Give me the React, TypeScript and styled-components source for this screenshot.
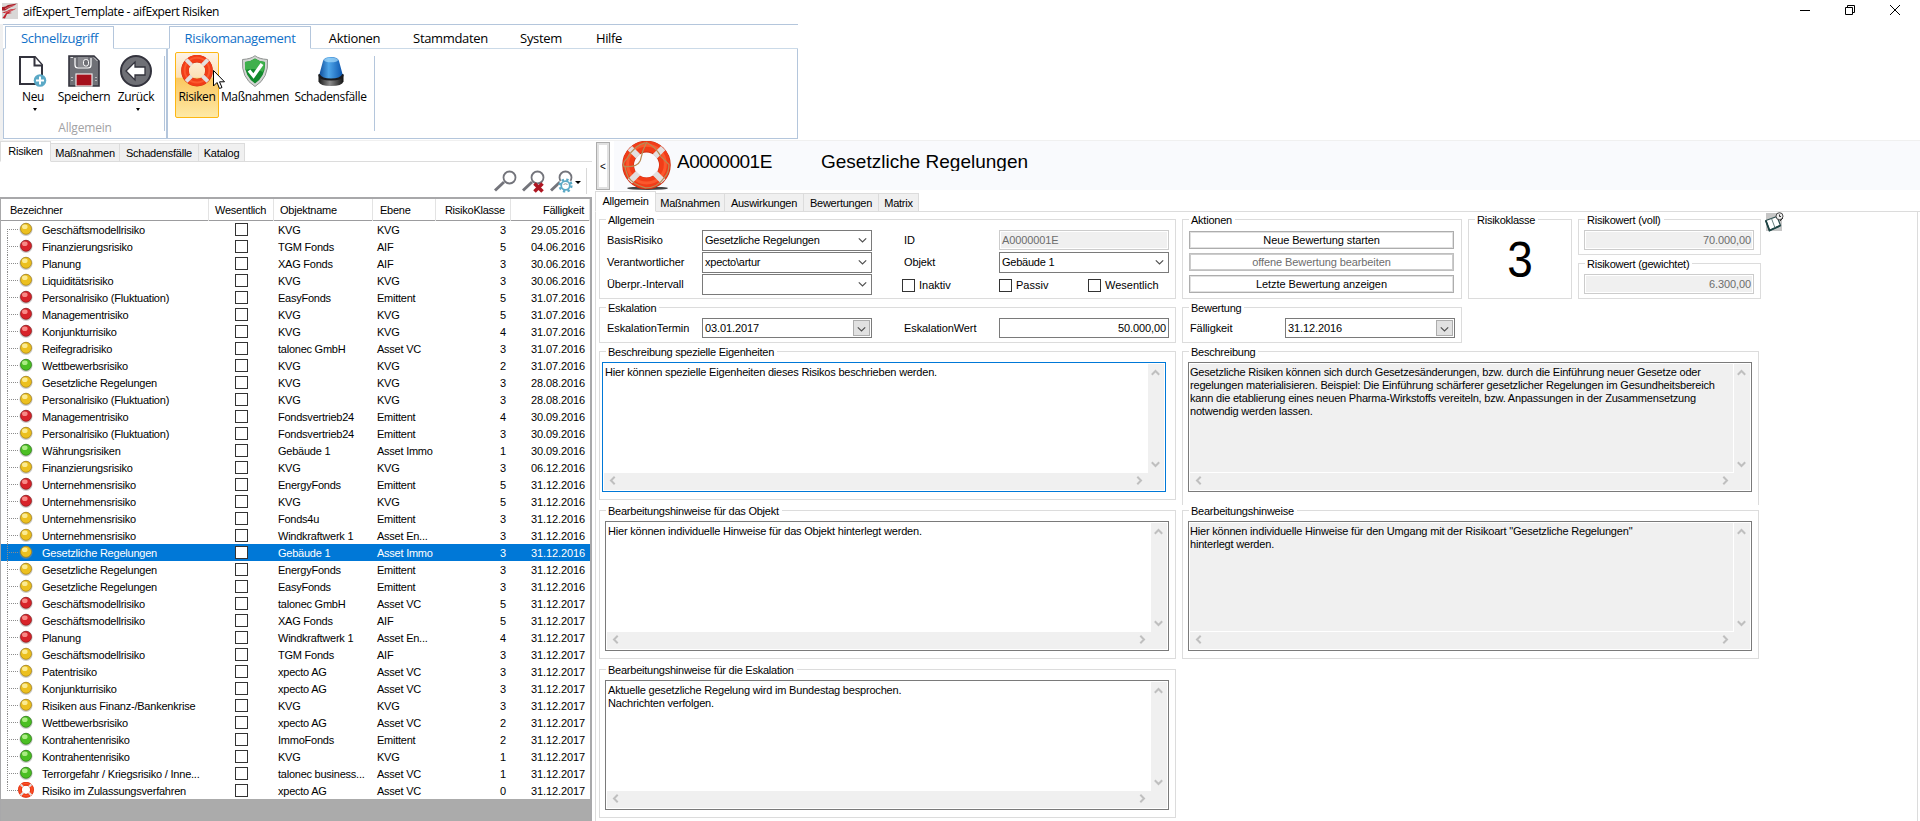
import React from "react";
import styled, { createGlobalStyle, css } from "styled-components";

const GlobalStyle = createGlobalStyle`
  *, *::before, *::after { box-sizing: border-box; }
  html, body { margin: 0; padding: 0; background: #fff; }
  body {
    width: 1920px; height: 821px; overflow: hidden; color: #000;
    font: 11px/13px "Liberation Sans", Arial, sans-serif;
    letter-spacing: -0.24px;
  }
`;

const LINE = "#dcdcdc";
const RIBBON_LINE = "#b4c6dc";

const Window = styled.div`
  width: 1920px;
  height: 821px;
  display: flex;
  flex-direction: column;
  background: #fff;
  white-space: nowrap;
`;

/* ---------- title bar ---------- */
const TitleBar = styled.header`
  height: 24px;
  display: flex;
  align-items: flex-start;
  padding: 3px 20px 0 2px;
  font: 12px/18px "Open Sans", "Noto Sans", sans-serif;
  letter-spacing: -0.38px;
`;
const Title = styled.span`
  margin-left: 5px;
  flex: 1;
`;
const WindowButtons = styled.div`
  display: flex;
  gap: 35px;
  padding-top: 2px;
`;

/* ---------- ribbon ---------- */
const Ribbon = styled.div`
  height: 116px;
  width: 798px;
  display: flex;
  border-left: 3px solid #f0f0f0;
`;
const RibbonPart = styled.section<{ $w: number }>`
  width: ${(p) => p.$w}px;
  height: 115px;
  display: flex;
  flex-direction: column;
  border-top: 1px solid ${RIBBON_LINE};
`;
const RibbonTabs = styled.nav<{ $lead: number }>`
  height: 24px;
  display: flex;
  padding-top: 1px;
  font: 13px/24px "Open Sans", "Noto Sans", sans-serif;
  letter-spacing: -0.33px;
  &::before {
    content: "";
    width: ${(p) => p.$lead}px;
    border-bottom: 1px solid #cbdae8;
  }
  &::after {
    content: "";
    flex: 1;
    border-bottom: 1px solid #cbdae8;
  }
`;
const RibbonTab = styled.span<{ $w: number; $active?: boolean }>`
  width: ${(p) => p.$w}px;
  text-align: center;
  border-bottom: 1px solid #cbdae8;
  ${(p) =>
    p.$active &&
    css`
      color: #1070c8;
      border: 1px solid ${RIBBON_LINE};
      border-bottom-color: #fff;
      line-height: 23px;
    `}
`;
const RibbonBody = styled.div<{ $right?: boolean }>`
  flex: 1;
  display: flex;
  align-items: flex-start;
  border: 1px solid ${RIBBON_LINE};
  border-top: 0;
  border-left-width: ${(p) => (p.$right ? 2 : 1)}px;
  border-right-width: ${(p) => (p.$right ? 1 : 0)}px;
  padding: 3px 0 0 7px;
`;
const ToolGroup = styled.div`
  display: flex;
  flex-direction: column;
  align-items: center;
`;
const ToolRow = styled.div`
  display: flex;
  height: 67px;
`;
const Tool = styled.button<{ $w: number; $hot?: boolean }>`
  width: ${(p) => p.$w}px;
  height: 66px;
  display: flex;
  flex-direction: column;
  align-items: center;
  padding: 2px 0 0;
  margin: 0;
  border: 1px solid transparent;
  border-radius: 2px;
  background: none;
  color: #000;
  font: 12px/18px "Open Sans", "Noto Sans", sans-serif;
  letter-spacing: -0.38px;
  white-space: nowrap;
  svg { flex: none; }
  ${(p) =>
    p.$hot &&
    css`
      border-color: #fdb714;
      background: linear-gradient(#fdf3e6 0, #fce0b5 38%, #fbc75e 39%, #fee9a6 100%);
    `}
`;
const ToolText = styled.span`
  margin-top: 1px;
`;
const Caret = styled.i`
  margin: 2px 0 0 3px;
  border: 2.5px solid transparent;
  border-top: 3px solid #000;
`;
const GroupCaption = styled.span`
  margin: 0;
  font: 12px/18px "Open Sans", "Noto Sans", sans-serif;
  letter-spacing: -0.2px;
  color: #a2a2a4;
`;
const ToolDivider = styled.i<{ $gap: number }>`
  width: 1px;
  height: 75px;
  margin: 4px 0 0 ${(p) => p.$gap}px;
  background: ${RIBBON_LINE};
`;
const Cursor = styled.svg`
  position: absolute;
  left: 213px;
  top: 70px;
`;

/* ---------- main split ---------- */
const Main = styled.main`
  flex: 1;
  display: flex;
  border-top: 1px solid #f0f0f0;
`;
const ListPane = styled.section`
  width: 592px;
  display: flex;
  flex-direction: column;
`;
const DetailPane = styled.section`
  flex: 1;
  margin-left: 3px;
  display: flex;
  flex-direction: column;
`;
const TabStrip = styled.nav`
  height: 21px;
  display: flex;
  align-items: flex-end;
  &::after {
    content: "";
    flex: 1;
    border-bottom: 1px solid ${LINE};
  }
`;
const Tab = styled.span<{ $w: number; $active?: boolean }>`
  width: ${(p) => p.$w}px;
  height: ${(p) => (p.$active ? 21 : 19)}px;
  padding-top: 3px;
  text-align: center;
  background: ${(p) => (p.$active ? "#fff" : "#f0f0f0")};
  border: 1px solid ${LINE};
  border-left-width: ${(p) => (p.$active ? 1 : 0)}px;
  border-bottom-color: ${(p) => (p.$active ? "#fff" : LINE)};
`;

/* ---------- list ---------- */
const SearchBar = styled.div`
  height: 35px;
  display: flex;
  align-items: flex-start;
  justify-content: flex-end;
  gap: 5px;
  margin-right: 5px;
  padding: 8px 6px 0 0;
  background: linear-gradient(#d8d8d8, #d8d8d8) 100% 70% / 1px 26px no-repeat;
`;
const SearchCaret = styled.i`
  margin: 11px 0 0 -3px;
  border: 3px solid transparent;
  border-top-color: #000;
`;
const Table = styled.div`
  flex: 1;
  background: #ababab;
  border: 2px solid #a8a8aa;
  border-left-width: 1px;
  border-bottom: 0;
`;
const COLS = "208px 65px 99px 63px 75px 79px";
const TableHead = styled.div`
  display: grid;
  grid-template-columns: ${COLS};
  height: 22px;
  background: #fff;
  border-bottom: 1px solid #9c9c9e;
`;
const HeadCell = styled.span<{ $right?: boolean; $pad: number }>`
  line-height: 22px;
  text-align: ${(p) => (p.$right ? "right" : "left")};
  padding: ${(p) => (p.$right ? `0 ${p.$pad}px 0 0` : `0 0 0 ${p.$pad}px`)};
  border-right: 1px solid #e3e3e3;
`;
const Row = styled.div<{ $selected?: boolean }>`
  display: grid;
  grid-template-columns: ${COLS};
  height: 17px;
  line-height: 18px;
  background: ${(p) => (p.$selected ? "#0078d7" : "#fff")};
  color: ${(p) => (p.$selected ? "#fff" : "#000")};
`;
const NameCell = styled.span`
  display: flex;
  align-items: flex-start;
`;
const Marker = styled.span`
  width: 16px;
  height: 17px;
  display: flex;
  justify-content: center;
`;
const NameText = styled.span`
  margin-left: 8px;
  letter-spacing: -0.22px;
`;
const Cell = styled.span<{ $pad: number }>`
  padding-left: ${(p) => p.$pad}px;
`;
const NumCell = styled.span<{ $pad: number }>`
  text-align: right;
  letter-spacing: -0.1px;
  padding-right: ${(p) => p.$pad}px;
`;
const Box = styled.i`
  display: block;
  flex: none;
  width: 13px;
  height: 13px;
  background: #fff;
  border: 1px solid #333;
`;
const BoxCell = styled.span`
  padding: 2px 0 0 26px;
`;

/* ---------- detail header ---------- */
const DetailHead = styled.div`
  height: 50px;
  display: flex;
  align-items: flex-start;
`;
const CollapseButton = styled.button`
  width: 14px;
  height: 48px;
  margin: 1px 4px 0 1px;
  padding: 0;
  border: 1px solid #adadad;
  box-shadow: inset 0 0 0 2px #e1e1e1;
  background: #fff;
  color: #000;
  font: 10px/13px "Liberation Sans", Arial, sans-serif;
`;
const HeadBand = styled.div`
  flex: 1;
  height: 49px;
  display: flex;
  background: #f9fafd;
  padding-left: 8px;
`;
const HeadTitle = styled.h1<{ $w: number; $ls: number }>`
  margin: 8px 0 0;
  width: ${(p) => p.$w}px;
  height: 22px;
  overflow: hidden;
  font: 400 19px/25px "Liberation Sans", Arial, sans-serif;
  letter-spacing: ${(p) => p.$ls}px;
`;
const HeadPicture = styled.div`
  width: 55px;
  height: 49px;
`;

/* ---------- form ---------- */
const Form = styled.div`
  flex: 1;
  display: flex;
  align-items: flex-start;
  gap: 7px;
  padding: 7px 0 0 3px;
  border-left: 1px solid ${LINE};
  border-right: 1px solid ${LINE};
  margin-right: 2px;
`;
const Column = styled.div<{ $w: number }>`
  width: ${(p) => p.$w}px;
  flex: none;
  display: flex;
  flex-direction: column;
`;
const TopRow = styled.div`
  display: flex;
  gap: 6px;
`;
const Group = styled.section<{ $w: number; $h: number; $mb?: number; $open?: boolean; $pad?: string }>`
  position: relative;
  flex: none;
  width: ${(p) => p.$w}px;
  height: ${(p) => p.$h}px;
  margin-bottom: ${(p) => p.$mb ?? 8}px;
  padding: ${(p) => p.$pad ?? "10px 5px 0"};
  border: 1px solid ${LINE};
  ${(p) => p.$open && "border-bottom: 0;"}
`;
const Legend = styled.span`
  position: absolute;
  left: 6px;
  top: -6px;
  padding: 0 3px 0 2px;
  background: #fff;
`;
const FieldGrid = styled.div`
  display: grid;
  grid-template-columns: 95px 170px 32px 95px 170px;
  row-gap: 1px;
  align-items: start;
  padding-left: 2px;
`;
const Label = styled.label`
  line-height: 21px;
  letter-spacing: -0.1px;
`;
const fieldBase = css`
  display: flex;
  align-items: center;
  width: 170px;
  border: 1px solid #7a7a7a;
  background: #fff;
  padding: 0 2px;
`;
const Combo = styled.div`
  ${fieldBase}
  height: 21px;
  justify-content: space-between;
  padding: 0 4px 0 2px;
`;
const DateField = styled.div`
  ${fieldBase}
  height: 20px;
  justify-content: space-between;
  padding: 0 1px 0 2px;
  letter-spacing: -0.1px;
`;
const DateButton = styled.span`
  width: 17px;
  height: 16px;
  display: flex;
  align-items: center;
  justify-content: center;
  padding-top: 2px;
  background: #e1e1e1;
  border: 1px solid #adadad;
`;
const Input = styled.div<{ $off?: boolean; $right?: boolean }>`
  ${fieldBase}
  height: 20px;
  letter-spacing: -0.1px;
  ${(p) => p.$right && "justify-content: flex-end;"}
  ${(p) =>
    p.$off &&
    css`
      color: #6d6d6d;
      background: #f0f0f0;
      border-color: #ccc;
      box-shadow: inset 0 0 0 1px #fff;
    `}
`;
const Checks = styled.div`
  grid-column: 4 / 6;
  margin-left: -2px;
  height: 21px;
  display: grid;
  grid-template-columns: 97px 89px 80px;
  align-items: center;
`;
const Check = styled.label`
  display: flex;
  gap: 4px;
  padding-top: 2px;
  letter-spacing: 0;
`;
const ActionButton = styled.button<{ $off?: boolean }>`
  display: block;
  width: 265px;
  height: 18px;
  margin: 0 0 4px 1px;
  padding: 0;
  border: 1px solid ${(p) => (p.$off ? "#bfbfbf" : "#adadad")};
  box-shadow: inset 0 0 0 1px ${(p) => (p.$off ? "#ccc" : "#e1e1e1")};
  background: #fff;
  color: ${(p) => (p.$off ? "#6d6d6d" : "#000")};
  font: 11px/14px "Liberation Sans", Arial, sans-serif;
  letter-spacing: -0.1px;
`;
const BigNumber = styled.div`
  font-size: 50px;
  line-height: 60px;
  text-align: center;
  transform: scaleX(0.92);
`;
const Area = styled.div<{ $focus?: boolean }>`
  width: 564px;
  height: 130px;
  margin-left: ${(p) => (p.$focus ? -3 : 0)}px;
  display: grid;
  grid-template: 1fr 17px / 1fr 16px;
  padding: 1px;
  border: 1px solid ${(p) => (p.$focus ? "#0078d7" : "#7a7a7a")};
  background: #fff;
`;
const AreaText = styled.div<{ $off?: boolean }>`
  padding: 2px 0 0 1px;
  white-space: pre;
  letter-spacing: -0.19px;
  ${(p) =>
    p.$off &&
    css`
      background: #f0f0f0;
      margin: 0 1px 1px 0;
      padding-left: 0;
    `}
`;
const VBar = styled.span`
  grid-row: 1 / 3;
  grid-column: 2;
  display: flex;
  flex-direction: column;
  align-items: center;
  justify-content: space-between;
  padding: 4px 2px 21px 0;
  background: #f0f0f0;
`;
const HBar = styled.span`
  grid-row: 2;
  grid-column: 1;
  display: flex;
  align-items: center;
  justify-content: space-between;
  padding: 0 4px 2px;
  background: #f0f0f0;
`;
const NotesButton = styled.span`
  margin: -7px 0 0 -2px;
  height: 20px;
`;

/* ---------- drawings ---------- */
const Chevron = ({ turn = 0, color = "#bfbfbf", w = 2 }: { turn?: number; color?: string; w?: number }) => (
  <svg width="9" height="9" viewBox="0 0 9 9">
    <path d="M0.8 2.3 4.5 6 8.2 2.3" fill="none" stroke={color} strokeWidth={w} transform={`rotate(${turn} 4.5 4.5)`} />
  </svg>
);

const Logo = () => (
  <svg width="16" height="16" viewBox="0 0 16 16">
    <rect width="16" height="16" fill="#d9d7d6" />
    <path d="M0 4Q3 4.500 6 2L15 .5Q11 4 7 5L3 7.500 0 7.500Z" fill="#a81c26" />
    <path d="M0 9.500Q5 8.500 8 6.500L14.500 5.500Q10 8 7 9.300L10 10 5 11 3 15.500 .5 15 4 10.300Z" fill="#c01f2a" />
    <path d="M3 5.800 8 3.500 13 2.300M3 9.800 8 7.800 12 6.700" stroke="#eb9a9c" strokeWidth=".6" fill="none" />
  </svg>
);

const MinIcon = () => (
  <svg width="10" height="10"><path d="M0 5.5H10" stroke="#000" /></svg>
);
const RestoreIcon = () => (
  <svg width="10" height="10" viewBox="0 0 10 10">
    <path d="M.5 2.5H7.5V9.5H.5ZM2.5 2.5V.5H9.5V7.5H7.5" fill="none" stroke="#000" />
  </svg>
);
const CloseIcon = () => (
  <svg width="10" height="10"><path d="M0 0 10 10M10 0 0 10" stroke="#000" /></svg>
);

const NewIcon = () => (
  <svg width="32" height="32" viewBox="0 0 32 32">
    <path d="M3 2H18L25 10V29H3Z" fill="#fff" stroke="#33333d" strokeWidth="2" />
    <path d="M17.500 2V10.500H25" fill="#fff" stroke="#33333d" strokeWidth="2" />
    <circle cx="23" cy="25.500" r="6.3" fill="#5ba9c6" />
    <path d="M23 21.500V29.500M19 25.500H27" stroke="#fff" strokeWidth="2" />
  </svg>
);
const SaveIcon = () => (
  <svg width="32" height="32" viewBox="0 0 32 32">
    <path d="M1 1H26L31 6V31H1Z" fill="#6f7076" stroke="#33333d" strokeWidth="1.6" />
    <path d="M7 3V10Q7 13 10 13H20Q23 13 23 10V3" fill="#6f7076" stroke="#fff" strokeWidth="1.2" />
    <path d="M10 2H20V12H10Z" fill="#8a8b90" />
    <rect x="15.500" y="4.500" width="5" height="6.500" rx="2.200" fill="#6f7076" stroke="#fff" />
    <path d="M2.500 2.500H5M26 2.500 29.500 6" stroke="#fff" strokeWidth=".8" />
    <rect x="8" y="19" width="16" height="12" fill="#a5101c" stroke="#e9e9ea" strokeWidth="1.200" />
    <path d="M4 22V28M28 22V28" stroke="#fff" strokeDasharray="1 2" />
  </svg>
);
const BackIcon = () => (
  <svg width="32" height="32" viewBox="0 0 32 32">
    <circle cx="16" cy="16" r="15" fill="#6f7076" stroke="#33333d" strokeWidth="2" />
    <path d="M6 16 15 7V12H25V20H15V25Z" fill="#fff" stroke="#33333d" strokeWidth="1.3" />
  </svg>
);
const Buoy = ({ size, rope }: { size: number; rope?: boolean }) => (
  <svg width={size} height={size} viewBox="0 0 48 48">
    {rope && <ellipse cx="25" cy="46.300" rx="20" ry="1.600" fill="#222" opacity=".85" />}
    <circle cx="24" cy="23.5" r="18" fill="none" stroke="#c93014" strokeWidth="11.5" />
    <circle cx="24" cy="23.2" r="18" fill="none" stroke="#f23c18" strokeWidth="10.4" />
    <circle cx="24" cy="22.7" r="18.5" fill="none" stroke="#ff6a3c" strokeWidth="3" opacity=".6" />
    <path
      d="M7.700 7 15.800 15.100M40.300 7 32.200 15.100M40.300 39.600 32.200 31.500M7.700 39.600 15.800 31.500"
      fill="none" stroke="#e2dfdf" strokeWidth="6"
    />
    {rope && (
      <path
        d="M23 1.500Q12 4 5 17 0 22 2 25 15 26 18 19 20 9 24 1.500 33 6 38 15L46 23Q46 31 42 35 35 46 23 46 10 42 6 35 3 28 3 24"
        fill="none" stroke="#b98a55" strokeWidth="1.2"
      />
    )}
  </svg>
);
const ShieldIcon = () => (
  <svg width="32" height="32" viewBox="0 0 32 32">
    <path d="M16 .7Q20 4 28.500 4.500 30 23 16 31.500 2 23 3.500 4.500 12 4 16 .7Z" fill="#d4d6d4" stroke="#8f9391" />
    <path d="M16 3.500Q20 6.500 26 7 27 21 16 28.500 5 21 6 7 12 6.500 16 3.500Z" fill="#128a2c" />
    <path d="M16 3.500Q20 6.500 26 7 26 13 24 17 16 12 6 15L6 7Q12 6.500 16 3.500Z" fill="#3fb04c" />
    <path d="M10 15.500 14.500 21 23 9" fill="none" stroke="#fff" strokeWidth="3.400" />
  </svg>
);
const SirenIcon = () => (
  <svg width="32" height="32" viewBox="0 0 32 32">
    <defs>
      <linearGradient id="lamp" x1="0" x2="1">
        <stop offset="0" stopColor="#0f4f9c" />
        <stop offset=".4" stopColor="#4fa6ea" />
        <stop offset="1" stopColor="#0c55ad" />
      </linearGradient>
      <linearGradient id="base" x1="0" x2="1">
        <stop offset="0" stopColor="#161616" />
        <stop offset=".45" stopColor="#8d8d8d" />
        <stop offset="1" stopColor="#111" />
      </linearGradient>
    </defs>
    <path d="M3.500 20V26.500Q5 31 16 31T28.500 26.500V20Z" fill="url(#base)" />
    <path d="M3.500 21Q5 25.500 16 25.500T28.500 21V19H3.500Z" fill="#1a1a1d" />
    <path d="M8 6Q9 2 16 2T24 6L27.500 19Q25 23.500 16 23.500T4.500 19Z" fill="url(#lamp)" />
    <ellipse cx="16" cy="5" rx="7" ry="2.300" fill="#a6dcfb" opacity=".7" />
  </svg>
);

const SearchIcon = ({ kind }: { kind?: "clear" | "gear" }) => (
  <svg width="23" height="23" viewBox="0 0 23 23">
    <path d="M1 20.500 10 12" stroke="#73747b" strokeWidth="3" />
    <circle cx="15.500" cy="7.500" r="6" fill="#fff" stroke="#73747b" strokeWidth="1.800" />
    {kind === "clear" && (
      <path d="M12.500 13.500 20.500 21.500M20.500 13.500 12.500 21.500" stroke="#ae1622" strokeWidth="3.600" />
    )}
    {kind === "gear" && (
      <>
        <circle cx="15.500" cy="15.500" r="6.800" fill="#fff" />
        <circle cx="15.500" cy="15.500" r="5.900" fill="none" stroke="#5ba9c6" strokeWidth="2.400" strokeDasharray="2.320 2.320" />
        <circle cx="15.500" cy="15.500" r="4.300" fill="#fff" stroke="#5ba9c6" strokeWidth="1.800" />
        <path d="M13.500 14.500Q15.500 13 17.500 14.500" stroke="#73747b" fill="none" strokeWidth=".8" />
      </>
    )}
  </svg>
);

const BALLS = {
  y: ["#fff5ae", "#ecc01f", "#a47c08"],
  r: ["#ffa39d", "#d8232a", "#8d1014"],
  g: ["#c2f79b", "#4bbf23", "#237a0c"],
};
const Ball = ({ tone }: { tone: "y" | "r" | "g" }) => (
  <svg width="14" height="16" viewBox="0 0 14 16">
    <circle cx="7" cy="8.300" r="6.600" fill="#8d8d8d" opacity=".45" />
    <circle cx="7" cy="7.800" r="5.500" fill={BALLS[tone][1]} stroke={BALLS[tone][2]} strokeWidth=".7" />
    <ellipse cx="5.800" cy="5.800" rx="2.800" ry="2.300" fill={BALLS[tone][0]} opacity=".8" />
  </svg>
);
const TreeLine = ({ first, last }: { first?: boolean; last?: boolean }) => (
  <svg width="17" height="17" viewBox="0 0 17 17">
    <path d={`M6.500 ${first ? 8 : 0}V${last ? 9 : 17}M8 8.500H17`} stroke="#8c8c8c" strokeDasharray="1 1" />
  </svg>
);
const NotesIcon = () => (
  <svg width="20" height="20" viewBox="0 0 20 20">
    <rect x="1" y="1" width="16" height="18" fill="#c6c6c6" />
    <path d="M.8 8.500 12 4.500 15.500 13.500 4.500 18.500Z" fill="#fff" stroke="#2b4d4d" strokeWidth="1.200" />
    <path d="M.8 8.500 4.500 18.500 15.500 13.500" fill="none" stroke="#1d4343" strokeWidth="1.800" />
    <path d="M6.500 6.500 10 15.800" stroke="#54706f" fill="none" strokeWidth=".9" />
    <circle cx="14.500" cy="4.200" r="3.500" fill="#ededed" stroke="#444" />
    <path d="M14.500 2.500V4.500H16M15 9 18 6" stroke="#333" fill="none" />
  </svg>
);

/* ---------- data ---------- */
type Tone = "y" | "r" | "g" | "b";
const ROWS: [Tone, string, string, string, number, string][] = [
  ["y", "Geschäftsmodellrisiko", "KVG", "KVG", 3, "29.05.2016"],
  ["r", "Finanzierungsrisiko", "TGM Fonds", "AIF", 5, "04.06.2016"],
  ["y", "Planung", "XAG Fonds", "AIF", 3, "30.06.2016"],
  ["y", "Liquiditätsrisiko", "KVG", "KVG", 3, "30.06.2016"],
  ["r", "Personalrisiko (Fluktuation)", "EasyFonds", "Emittent", 5, "31.07.2016"],
  ["r", "Managementrisiko", "KVG", "KVG", 5, "31.07.2016"],
  ["r", "Konjunkturrisiko", "KVG", "KVG", 4, "31.07.2016"],
  ["y", "Reifegradrisiko", "talonec GmbH", "Asset VC", 3, "31.07.2016"],
  ["g", "Wettbewerbsrisiko", "KVG", "KVG", 2, "31.07.2016"],
  ["y", "Gesetzliche Regelungen", "KVG", "KVG", 3, "28.08.2016"],
  ["y", "Personalrisiko (Fluktuation)", "KVG", "KVG", 3, "28.08.2016"],
  ["r", "Managementrisiko", "Fondsvertrieb24", "Emittent", 4, "30.09.2016"],
  ["y", "Personalrisiko (Fluktuation)", "Fondsvertrieb24", "Emittent", 3, "30.09.2016"],
  ["g", "Währungsrisiken", "Gebäude 1", "Asset Immo", 1, "30.09.2016"],
  ["y", "Finanzierungsrisiko", "KVG", "KVG", 3, "06.12.2016"],
  ["r", "Unternehmensrisiko", "EnergyFonds", "Emittent", 5, "31.12.2016"],
  ["r", "Unternehmensrisiko", "KVG", "KVG", 5, "31.12.2016"],
  ["y", "Unternehmensrisiko", "Fonds4u", "Emittent", 3, "31.12.2016"],
  ["y", "Unternehmensrisiko", "Windkraftwerk 1", "Asset En...", 3, "31.12.2016"],
  ["y", "Gesetzliche Regelungen", "Gebäude 1", "Asset Immo", 3, "31.12.2016"],
  ["y", "Gesetzliche Regelungen", "EnergyFonds", "Emittent", 3, "31.12.2016"],
  ["y", "Gesetzliche Regelungen", "EasyFonds", "Emittent", 3, "31.12.2016"],
  ["r", "Geschäftsmodellrisiko", "talonec GmbH", "Asset VC", 5, "31.12.2017"],
  ["r", "Geschäftsmodellrisiko", "XAG Fonds", "AIF", 5, "31.12.2017"],
  ["r", "Planung", "Windkraftwerk 1", "Asset En...", 4, "31.12.2017"],
  ["y", "Geschäftsmodellrisiko", "TGM Fonds", "AIF", 3, "31.12.2017"],
  ["y", "Patentrisiko", "xpecto AG", "Asset VC", 3, "31.12.2017"],
  ["y", "Konjunkturrisiko", "xpecto AG", "Asset VC", 3, "31.12.2017"],
  ["y", "Risiken aus Finanz-/Bankenkrise", "KVG", "KVG", 3, "31.12.2017"],
  ["g", "Wettbewerbsrisiko", "xpecto AG", "Asset VC", 2, "31.12.2017"],
  ["g", "Kontrahentenrisiko", "ImmoFonds", "Emittent", 2, "31.12.2017"],
  ["g", "Kontrahentenrisiko", "KVG", "KVG", 1, "31.12.2017"],
  ["g", "Terrorgefahr / Kriegsrisiko / Inne...", "talonec business...", "Asset VC", 1, "31.12.2017"],
  ["b", "Risiko im Zulassungsverfahren", "xpecto AG", "Asset VC", 0, "31.12.2017"],
];
const SELECTED = 19;

const TextBox = ({ text, focus, off }: { text: string; focus?: boolean; off?: boolean }) => (
  <Area $focus={focus}>
    <AreaText $off={off}>{text}</AreaText>
    <VBar>
      <Chevron turn={180} />
      <Chevron />
    </VBar>
    <HBar>
      <Chevron turn={90} />
      <Chevron turn={-90} />
    </HBar>
  </Area>
);
const ComboBox = ({ value }: { value: string }) => (
  <Combo>
    <span>{value}</span>
    <Chevron color="#505050" w={1.2} />
  </Combo>
);
const DateBox = ({ value }: { value: string }) => (
  <DateField>
    <span>{value}</span>
    <DateButton>
      <Chevron color="#505050" w={1.2} />
    </DateButton>
  </DateField>
);

export default function App() {
  return (
    <Window>
      <GlobalStyle />
      <TitleBar>
        <Logo />
        <Title>aifExpert_Template - aifExpert Risiken</Title>
        <WindowButtons>
          <MinIcon />
          <RestoreIcon />
          <CloseIcon />
        </WindowButtons>
      </TitleBar>

      <Ribbon>
        <RibbonPart $w={163}>
          <RibbonTabs $lead={2}>
            <RibbonTab $w={109} $active>Schnellzugriff</RibbonTab>
          </RibbonTabs>
          <RibbonBody>
            <ToolGroup>
              <ToolRow>
                <Tool $w={44}>
                  <NewIcon />
                  <ToolText>Neu</ToolText>
                  <Caret />
                </Tool>
                <Tool $w={58}>
                  <SaveIcon />
                  <ToolText>Speichern</ToolText>
                </Tool>
                <Tool $w={46}>
                  <BackIcon />
                  <ToolText>Zurück</ToolText>
                  <Caret />
                </Tool>
              </ToolRow>
              <GroupCaption>Allgemein</GroupCaption>
            </ToolGroup>
            <ToolDivider $gap={5} />
          </RibbonBody>
        </RibbonPart>
        <RibbonPart $w={632}>
          <RibbonTabs $lead={3}>
            <RibbonTab $w={142} $active>Risikomanagement</RibbonTab>
            <RibbonTab $w={87}>Aktionen</RibbonTab>
            <RibbonTab $w={105}>Stammdaten</RibbonTab>
            <RibbonTab $w={76}>System</RibbonTab>
            <RibbonTab $w={60}>Hilfe</RibbonTab>
          </RibbonTabs>
          <RibbonBody $right>
            <ToolRow>
              <Tool $w={44} $hot>
                <Buoy size={32} />
                <ToolText>Risiken</ToolText>
              </Tool>
              <Tool $w={72}>
                <ShieldIcon />
                <ToolText>Maßnahmen</ToolText>
              </Tool>
              <Tool $w={79}>
                <SirenIcon />
                <ToolText>Schadensfälle</ToolText>
              </Tool>
            </ToolRow>
            <ToolDivider $gap={4} />
          </RibbonBody>
        </RibbonPart>
      </Ribbon>

      <Main>
        <ListPane>
          <TabStrip>
            <Tab $w={51} $active>Risiken</Tab>
            <Tab $w={69}>Maßnahmen</Tab>
            <Tab $w={79}>Schadensfälle</Tab>
            <Tab $w={46}>Katalog</Tab>
          </TabStrip>
          <SearchBar>
            <SearchIcon />
            <SearchIcon kind="clear" />
            <SearchIcon kind="gear" />
            <SearchCaret />
          </SearchBar>
          <Table>
            <TableHead>
              <HeadCell $pad={9}>Bezeichner</HeadCell>
              <HeadCell $pad={6}>Wesentlich</HeadCell>
              <HeadCell $pad={6}>Objektname</HeadCell>
              <HeadCell $pad={7}>Ebene</HeadCell>
              <HeadCell $pad={5} $right>RisikoKlasse</HeadCell>
              <HeadCell $pad={5} $right>Fälligkeit</HeadCell>
            </TableHead>
            {ROWS.map(([tone, name, object, level, risk, due], i) => (
              <Row key={i} $selected={i === SELECTED}>
                <NameCell>
                  <TreeLine first={i === 0} last={i === ROWS.length - 1} />
                  <Marker>{tone === "b" ? <Buoy size={16} /> : <Ball tone={tone} />}</Marker>
                  <NameText>{name}</NameText>
                </NameCell>
                <BoxCell><Box /></BoxCell>
                <Cell $pad={4}>{object}</Cell>
                <Cell $pad={4}>{level}</Cell>
                <NumCell $pad={5}>{risk}</NumCell>
                <NumCell $pad={5}>{due}</NumCell>
              </Row>
            ))}
          </Table>
        </ListPane>

        <DetailPane>
          <DetailHead>
            <CollapseButton>&lt;</CollapseButton>
            <HeadBand>
              <HeadPicture>
                <Buoy size={49} rope />
              </HeadPicture>
              <HeadTitle $w={144} $ls={-0.5}>A0000001E</HeadTitle>
              <HeadTitle $w={300} $ls={0}>Gesetzliche Regelungen</HeadTitle>
            </HeadBand>
          </DetailHead>
          <TabStrip>
            <Tab $w={61} $active>Allgemein</Tab>
            <Tab $w={69}>Maßnahmen</Tab>
            <Tab $w={79}>Auswirkungen</Tab>
            <Tab $w={75}>Bewertungen</Tab>
            <Tab $w={40}>Matrix</Tab>
          </TabStrip>
          <Form>
            <Column $w={576}>
              <Group $w={577} $h={80}>
                <Legend>Allgemein</Legend>
                <FieldGrid>
                  <Label>BasisRisiko</Label>
                  <ComboBox value="Gesetzliche Regelungen" />
                  <span />
                  <Label>ID</Label>
                  <Input $off>A0000001E</Input>
                  <Label>Verantwortlicher</Label>
                  <ComboBox value="xpecto\artur" />
                  <span />
                  <Label>Objekt</Label>
                  <ComboBox value="Gebäude 1" />
                  <Label>Überpr.-Intervall</Label>
                  <ComboBox value="" />
                  <span />
                  <Checks>
                    <Check><Box />Inaktiv</Check>
                    <Check><Box />Passiv</Check>
                    <Check><Box />Wesentlich</Check>
                  </Checks>
                </FieldGrid>
              </Group>
              <Group $w={577} $h={36}>
                <Legend>Eskalation</Legend>
                <FieldGrid>
                  <Label>EskalationTermin</Label>
                  <DateBox value="03.01.2017" />
                  <span />
                  <Label>EskalationWert</Label>
                  <Input $right>50.000,00</Input>
                </FieldGrid>
              </Group>
              <Group $w={577} $h={149} $mb={10}>
                <Legend>Beschreibung spezielle Eigenheiten</Legend>
                <TextBox focus text="Hier können spezielle Eigenheiten dieses Risikos beschrieben werden." />
              </Group>
              <Group $w={577} $h={149} $mb={10}>
                <Legend>Bearbeitungshinweise für das Objekt</Legend>
                <TextBox text="Hier können individuelle Hinweise für das Objekt hinterlegt werden." />
              </Group>
              <Group $w={577} $h={149} $mb={0}>
                <Legend>Bearbeitungshinweise für die Eskalation</Legend>
                <TextBox text={"Aktuelle gesetzliche Regelung wird im Bundestag besprochen.\nNachrichten verfolgen."} />
              </Group>
            </Column>
            <Column $w={610}>
              <TopRow>
                <Group $w={280} $h={80} $pad="11px 5px 0">
                  <Legend>Aktionen</Legend>
                  <ActionButton>Neue Bewertung starten</ActionButton>
                  <ActionButton $off>offene Bewertung bearbeiten</ActionButton>
                  <ActionButton>Letzte Bewertung anzeigen</ActionButton>
                </Group>
                <Group $w={104} $h={80}>
                  <Legend>Risikoklasse</Legend>
                  <BigNumber>3</BigNumber>
                </Group>
                <Column $w={183}>
                  <Group $w={183} $h={36}>
                    <Legend>Risikowert (voll)</Legend>
                    <Input $off $right>70.000,00</Input>
                  </Group>
                  <Group $w={183} $h={36}>
                    <Legend>Risikowert (gewichtet)</Legend>
                    <Input $off $right>6.300,00</Input>
                  </Group>
                </Column>
                <NotesButton>
                  <NotesIcon />
                </NotesButton>
              </TopRow>
              <Group $w={280} $h={36}>
                <Legend>Bewertung</Legend>
                <FieldGrid>
                  <Label>Fälligkeit</Label>
                  <DateBox value="31.12.2016" />
                </FieldGrid>
              </Group>
              <Group $w={577} $h={154} $mb={5} $open>
                <Legend>Beschreibung</Legend>
                <TextBox
                  off
                  text={
                    "Gesetzliche Risiken können sich durch Gesetzesänderungen, bzw. durch die Einführung neuer Gesetze oder\n" +
                    "regelungen materialisieren. Beispiel: Die Einführung schärferer gesetzlicher Regelungen im Gesundheitsbereich\n" +
                    "kann die etablierung eines neuen Pharma-Wirkstoffs vereiteln, bzw. Anpassungen in der Zusammensetzung\n" +
                    "notwendig werden lassen."
                  }
                />
              </Group>
              <Group $w={577} $h={149}>
                <Legend>Bearbeitungshinweise</Legend>
                <TextBox
                  off
                  text={'Hier können individuelle Hinweise für den Umgang mit der Risikoart "Gesetzliche Regelungen"\nhinterlegt werden.'}
                />
              </Group>
            </Column>
          </Form>
        </DetailPane>
      </Main>
      <Cursor width="13" height="20" viewBox="0 0 13 20">
        <path d="M.5.500V16L4 12.500 6.500 18.500 9 17.500 6.500 11.800H11.500Z" fill="#fff" stroke="#000" />
      </Cursor>
    </Window>
  );
}
